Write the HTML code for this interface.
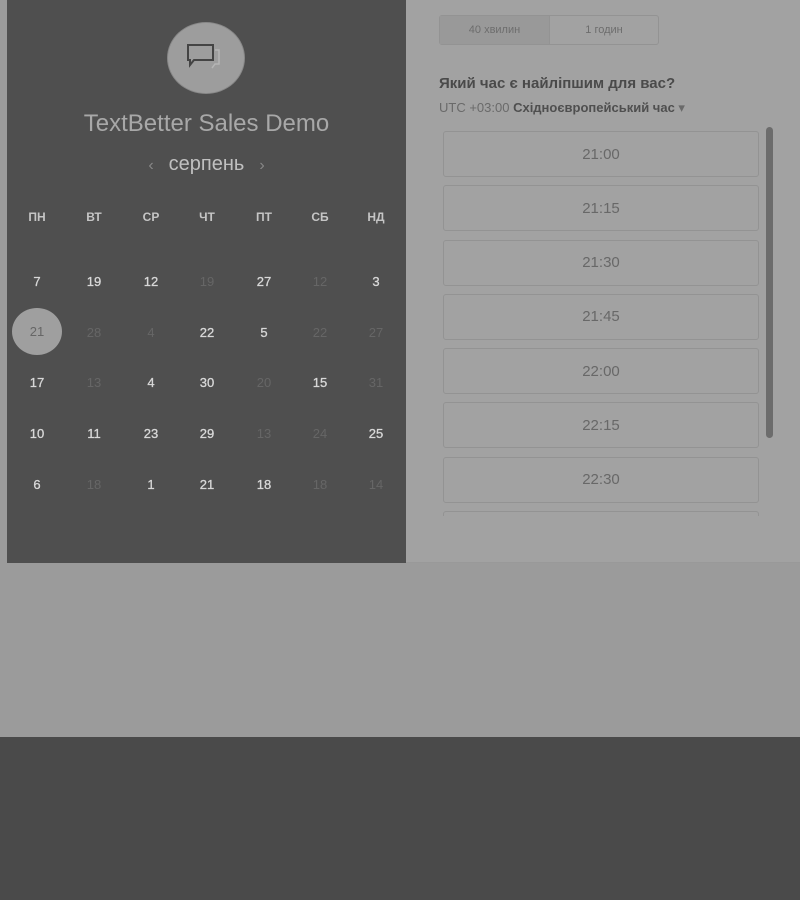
<!DOCTYPE html>
<html><head><meta charset="utf-8"><style>
*{margin:0;padding:0;box-sizing:border-box}
body{width:800px;height:900px;background:#9b9b9b;position:relative;overflow:hidden;font-family:"Liberation Sans","DejaVu Sans",sans-serif}
.left{position:absolute;left:7px;top:0;width:399px;height:563px;background:#4f4f4f}
.right{position:absolute;left:406px;top:0;width:394px;height:563px;background:#a2a2a2;border-bottom:1px solid #999}
.bottom{position:absolute;left:0;top:737px;width:800px;height:163px;background:#4a4a4a}
.logo{position:absolute;left:167px;top:22px;width:78px;height:72px;border-radius:50%;background:#9d9d9d;border:1px solid #888}
.title{position:absolute;left:0;width:413px;top:110px;text-align:center;color:#a8a8a8;font-size:24px}
.month{position:absolute;left:0;width:413px;top:153px;text-align:center;color:#c0c0c0;font-size:20px}
.month span{color:#888;font-size:16px;margin:0 15px}
.d{position:absolute;width:50px;margin-left:-25px;text-align:center;font-size:13px;color:#d8d8d8;-webkit-text-stroke:0.3px #d8d8d8}
.h{font-size:12px;color:#c5c5c5;font-weight:bold;-webkit-text-stroke:0}
.dim{color:#666;-webkit-text-stroke:0}
.sel{position:absolute;left:12px;top:308px;width:50px;height:47px;border-radius:50%;background:#9f9f9f}
.tabs{position:absolute;left:439px;top:15px;width:220px;height:30px;border:1px solid #939393;border-radius:3px;display:flex;font-size:11px;color:#6d6d6d}
.tabs div{flex:1;display:flex;align-items:center;justify-content:center}
.tabs div:first-child{background:#999;border-right:1px solid #939393;width:110px;flex:none}
.q{position:absolute;left:439px;top:75px;font-size:15px;font-weight:bold;color:#4a4a4a}
.tz{position:absolute;left:439px;top:100px;font-size:13px;color:#6a6a6a}
.tz b{color:#4f4f4f}
.slots{position:absolute;left:443px;top:131px;width:316px;height:385px;overflow:hidden}
.s{height:46px;margin-bottom:8.3px;border:1px solid #939393;border-radius:3px;display:flex;align-items:center;justify-content:center;font-size:15px;color:#686868}
.sb{position:absolute;left:766px;top:127px;width:7px;height:311px;border-radius:4px;background:#6c6c6c}
</style></head><body>
<div class="left"></div>
<div class="right"></div>
<div class="bottom"></div>
<div class="logo"><svg width="78" height="72" viewBox="0 0 78 72"><path d="M20 22h25v15H26l-4 5v-5h-2z" fill="none" stroke="#444" stroke-width="2"/><path d="M47 27h4v14h-4l-3 4" fill="none" stroke="#b5b5b5" stroke-width="1.5"/></svg></div>
<div class="title">TextBetter Sales Demo</div>
<div class="month"><span>‹</span>серпень<span>›</span></div>
<div class="sel"></div>
<div class="tabs"><div>40 хвилин</div><div>1 годин</div></div>
<div class="q">Який час є найліпшим для вас?</div>
<div class="tz">UTC +03:00 <b>Східноєвропейський час</b> ▾</div>
<div class="slots">
<div class="s">21:00</div><div class="s">21:15</div><div class="s">21:30</div><div class="s">21:45</div><div class="s">22:00</div><div class="s">22:15</div><div class="s">22:30</div><div class="s"></div>
</div>
<div class="sb"></div>
<div class="d h" style="left:37px;top:210px">ПН</div>
<div class="d h" style="left:94px;top:210px">ВТ</div>
<div class="d h" style="left:151px;top:210px">СР</div>
<div class="d h" style="left:207px;top:210px">ЧТ</div>
<div class="d h" style="left:264px;top:210px">ПТ</div>
<div class="d h" style="left:320px;top:210px">СБ</div>
<div class="d h" style="left:376px;top:210px">НД</div>

<div class="d" style="left:37px;top:274px">7</div>
<div class="d" style="left:94px;top:274px">19</div>
<div class="d" style="left:151px;top:274px">12</div>
<div class="d dim" style="left:207px;top:274px">19</div>
<div class="d" style="left:264px;top:274px">27</div>
<div class="d dim" style="left:320px;top:274px">12</div>
<div class="d" style="left:376px;top:274px">3</div>

<div class="d dim" style="left:37px;top:324px">21</div>
<div class="d dim" style="left:94px;top:325px">28</div>
<div class="d dim" style="left:151px;top:325px">4</div>
<div class="d" style="left:207px;top:325px">22</div>
<div class="d" style="left:264px;top:325px">5</div>
<div class="d dim" style="left:320px;top:325px">22</div>
<div class="d dim" style="left:376px;top:325px">27</div>

<div class="d" style="left:37px;top:375px">17</div>
<div class="d dim" style="left:94px;top:375px">13</div>
<div class="d" style="left:151px;top:375px">4</div>
<div class="d" style="left:207px;top:375px">30</div>
<div class="d dim" style="left:264px;top:375px">20</div>
<div class="d" style="left:320px;top:375px">15</div>
<div class="d dim" style="left:376px;top:375px">31</div>

<div class="d" style="left:37px;top:426px">10</div>
<div class="d" style="left:94px;top:426px">11</div>
<div class="d" style="left:151px;top:426px">23</div>
<div class="d" style="left:207px;top:426px">29</div>
<div class="d dim" style="left:264px;top:426px">13</div>
<div class="d dim" style="left:320px;top:426px">24</div>
<div class="d" style="left:376px;top:426px">25</div>

<div class="d" style="left:37px;top:477px">6</div>
<div class="d dim" style="left:94px;top:477px">18</div>
<div class="d" style="left:151px;top:477px">1</div>
<div class="d" style="left:207px;top:477px">21</div>
<div class="d" style="left:264px;top:477px">18</div>
<div class="d dim" style="left:320px;top:477px">18</div>
<div class="d dim" style="left:376px;top:477px">14</div>
</body></html>
